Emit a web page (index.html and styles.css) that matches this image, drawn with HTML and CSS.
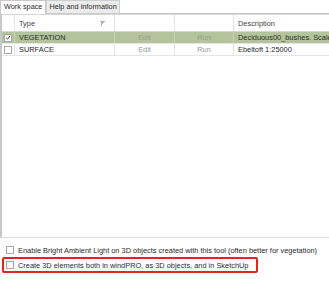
FILE: index.html
```html
<!DOCTYPE html>
<html>
<head>
<meta charset="utf-8">
<link rel="stylesheet" href="styles.css">
</head>
<body>
<div class="app">
  <div class="tabs">
    <div class="tab active">Work space</div>
    <div class="tab">Help and information</div>
  </div>
  <div class="panel">
    <div class="grid">
      <div class="row header">
        <div class="c cb"></div>
        <div class="c type">Type<svg class="filter" width="5" height="5" viewBox="0 0 5 5"><path d="M0 0H5V1H4V2H3V3H2V5H1V1H0Z" fill="#b5b5b5"/></svg></div>
        <div class="c edit"></div>
        <div class="c run"></div>
        <div class="c desc">Description</div>
      </div>
      <div class="row sel">
        <div class="c cb"><span class="box checked"><svg width="7" height="7" viewBox="0 0 7 7"><path d="M1 3.5L3 5.5L6 1.5" fill="none" stroke="#555" stroke-width="1.1"/></svg></span></div>
        <div class="c type">VEGETATION</div>
        <div class="c edit dim">Edit</div>
        <div class="c run dim">Run</div>
        <div class="c desc">Deciduous00_bushes. Scaled</div>
      </div>
      <div class="row">
        <div class="c cb"><span class="box"></span></div>
        <div class="c type">SURFACE</div>
        <div class="c edit dim">Edit</div>
        <div class="c run dim">Run</div>
        <div class="c desc">Ebeltoft 1:25000</div>
      </div>
    </div>
  </div>
  <div class="options">
    <label class="opt"><span class="box"></span>Enable Bright Ambient Light on 3D objects created with this tool (often better for vegetation)</label>
    <label class="opt hl"><span class="box"></span>Create 3D elements both in windPRO, as 3D objects, and in SketchUp</label>
  </div>
</div>
</body>
</html>
```
FILE: styles.css
```css
* { box-sizing: border-box; }
html, body { margin: 0; padding: 0; background: #fff; }
body {
  font-family: "Liberation Sans", Arial, sans-serif;
  font-size: 7.4px;
  color: #2a2a2a;
  width: 329px;
  height: 284px;
  overflow: hidden;
}
.app { display: flex; flex-direction: column; height: 284px; }
.tabs {
  display: flex;
  height: 14px;
  border-bottom: 1px solid #c9c9c9;
  align-items: flex-end;
}
.tab {
  height: 13px;
  padding: 0 2px;
  line-height: 12px;
  border: 1px solid #cfcfcf;
  border-bottom: none;
  background: #ececec;
  color: #2a2a2a;
  white-space: nowrap;
  font-size: 7.3px;
}
.tab.active {
  background: #fff;
  height: 14px;
  margin-bottom: -1px;
  border-color: #c9c9c9;
  padding: 0 3px;
}
.panel {
  height: 223px;
  border-left: 2px solid #c8c8c8;
  background: #fff;
}
.grid { display: flex; flex-direction: column; }
.row {
  display: flex;
  height: 12px;
  border-bottom: 1px solid #e6e6e6;
  line-height: 11px;
  white-space: nowrap;
}
.row.header { height: 18px; line-height: 17px; border-top: 1px solid #d6d6d6; border-bottom: 1px solid #d6d6d6; color: #444; }
.row.sel { background: #b3c49c; }
.c { border-right: 1px solid #e3e3e3; overflow: hidden; padding-left: 4px; }
.row.sel .c { border-right-color: #c8d4b8; }
.cb { width: 13px; padding-left: 2px; display: flex; align-items: center; }
.type { width: 100px; position: relative; }
.edit { width: 60px; text-align: center; padding-left: 0; }
.run { width: 59px; text-align: center; padding-left: 0; }
.desc { flex: 1; border-right: none; padding-left: 4px; }
.dim { color: #9a9a9a; }
.filter { position: absolute; right: 9px; top: 6px; }
.box {
  display: inline-flex;
  align-items: center;
  justify-content: center;
  width: 8px;
  height: 8px;
  border: 1px solid #a8a8a8;
  background: #fff;
  flex: none;
}
.options {
  border-top: 1px solid #dcdcdc;
  padding: 5px 2px 0 2px;
  display: flex;
  flex-direction: column;
  gap: 0;
}
.opt {
  display: flex;
  align-items: center;
  gap: 4px;
  height: 14px;
  padding-left: 4px;
  white-space: nowrap;
}
.opt.hl {
  border: 2px solid #e32424;
  border-radius: 2px;
  width: 256px;
  padding-left: 2px;
  height: 16px;
}
```
